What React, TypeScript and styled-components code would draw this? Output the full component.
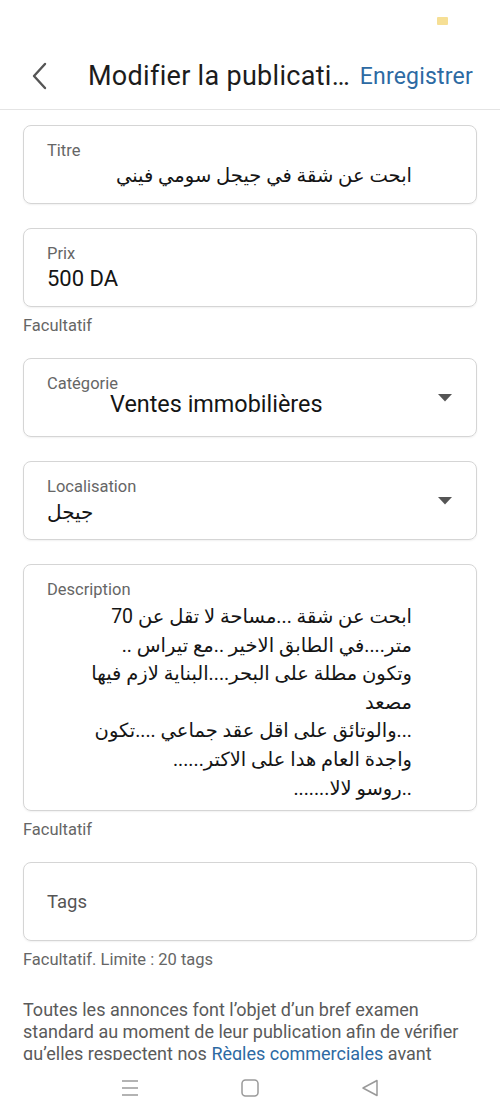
import React from 'react'
import styled, { createGlobalStyle } from 'styled-components'

const GlobalStyle = createGlobalStyle`
  html, body {
    margin: 0;
    padding: 0;
    background: #fff;
  }
  body {
    font-family: Roboto, "DejaVu Sans", sans-serif;
    -webkit-font-smoothing: antialiased;
  }
`

const description = [
  'ابحت عن شقة ...مساحة لا تقل عن 70',
  'متر....في الطابق الاخير ..مع تيراس ..',
  'وتكون مطلة على البحر....البناية لازم فيها',
  'مصعد',
  '...والوتائق على اقل عقد جماعي ....تكون',
  'واجدة العام هدا على الاكتر......',
  '..روسو لالا.......'
]

const Chevron = () => (
  <svg width="16" height="28" viewBox="0 0 16 28" fill="none">
    <polyline points="13,2 2,14 13,26" stroke="#555" strokeWidth="2.4" strokeLinecap="round" strokeLinejoin="round" />
  </svg>
)

const Caret = () => (
  <svg width="14" height="8" viewBox="0 0 14 8">
    <polygon points="0,0 14,0 7,7.5" fill="#555" />
  </svg>
)

const MenuIcon = () => (
  <svg width="18" height="18" viewBox="0 0 18 18" fill="none" stroke="#9a9a9a" strokeWidth="1.5">
    <line x1="1" y1="2" x2="17" y2="2" />
    <line x1="1" y1="9" x2="17" y2="9" />
    <line x1="1" y1="16" x2="17" y2="16" />
  </svg>
)

const HomeIcon = () => (
  <svg width="18" height="18" viewBox="0 0 18 18" fill="none" stroke="#9a9a9a" strokeWidth="1.5">
    <rect x="1" y="1" width="16" height="16" rx="3.5" />
  </svg>
)

const BackIcon = () => (
  <svg width="18" height="18" viewBox="0 0 18 18" fill="none" stroke="#9a9a9a" strokeWidth="1.5" strokeLinejoin="round">
    <polygon points="16,1.5 16,16.5 2,9" />
  </svg>
)

export default function App() {
  return (
    <>
      <GlobalStyle />
      <Screen>
        <StatusBar>
          <Battery />
        </StatusBar>
        <Header>
          <BackButton>
            <Chevron />
          </BackButton>
          <Title>Modifier la publicati…</Title>
          <SaveButton>Enregistrer</SaveButton>
        </Header>

        <Content>
          <Field>
            <FieldBody>
              <Label>Titre</Label>
              <Value $rtl>ابحت عن شقة في جيجل سومي فيني</Value>
            </FieldBody>
          </Field>

          <Field>
            <FieldBody>
              <Label>Prix</Label>
              <Value>500 DA</Value>
            </FieldBody>
          </Field>
          <Helper>Facultatif</Helper>

          <Field>
            <FieldBody>
              <Label>Catégorie</Label>
              <Value $indent={63} $size={23.4} $lift>Ventes immobilières</Value>
            </FieldBody>
            <Caret />
          </Field>

          <Field>
            <FieldBody>
              <Label>Localisation</Label>
              <Value $size={20}>جيجل</Value>
            </FieldBody>
            <Caret />
          </Field>

          <Field $tall>
            <FieldBody>
              <Label>Description</Label>
              <Paragraph>
                {description.map((line, i) => (
                  <Line key={i}>{line}</Line>
                ))}
              </Paragraph>
            </FieldBody>
          </Field>
          <Helper>Facultatif</Helper>

          <Field>
            <Placeholder>Tags</Placeholder>
          </Field>
          <Helper>Facultatif. Limite : 20 tags</Helper>

          <Notice>
            Toutes les annonces font l’objet d’un bref examen standard au moment de leur
            publication afin de vérifier qu’elles respectent nos <Link>Règles commerciales</Link>{' '}
            avant d’être publiées.
          </Notice>
        </Content>

        <NavBar>
          <MenuIcon />
          <HomeIcon />
          <BackIcon />
        </NavBar>
      </Screen>
    </>
  )
}

const Screen = styled.div`
  width: 500px;
  height: 1120px;
  display: flex;
  flex-direction: column;
  overflow: hidden;
  background: #fff;
`

const StatusBar = styled.div`
  height: 45px;
  display: flex;
  justify-content: flex-end;
  padding: 17px 52px 0 0;
  box-sizing: border-box;
`

const Battery = styled.span`
  width: 11px;
  height: 8px;
  border-radius: 1px;
  background: #f6df95;
`

const Header = styled.div`
  height: 65px;
  box-sizing: border-box;
  border-bottom: 1px solid #e4e4e4;
  display: flex;
  align-items: center;
  padding: 0 27px 2px 32px;
`

const BackButton = styled.div`
  width: 56px;
  display: flex;
  align-items: center;
`

const Title = styled.div`
  flex: 1;
  font-size: 27px;
  letter-spacing: 0.3px;
  color: #1c1c1c;
  white-space: nowrap;
`

const SaveButton = styled.div`
  font-size: 23px;
  letter-spacing: 0.2px;
  color: #2d6aa3;
  font-weight: 400;
`

const Content = styled.div`
  flex: 1;
  overflow: hidden;
  padding: 15px 23px 0;
  display: flex;
  flex-direction: column;
`

const Field = styled.div<{ $tall?: boolean }>`
  box-sizing: border-box;
  height: ${p => (p.$tall ? 247 : 79)}px;
  flex-shrink: 0;
  border: 1px solid #d5d5d5;
  border-radius: 8px;
  box-shadow: 0 1px 2px rgba(0, 0, 0, 0.06);
  display: flex;
  align-items: center;
  padding: 0 24px 0 23px;
  margin-bottom: 24px;
`

const FieldBody = styled.div`
  flex: 1;
  align-self: flex-start;
  padding-top: 15px;
  display: flex;
  flex-direction: column;
`

const Label = styled.div`
  font-size: 16.5px;
  line-height: 20px;
  color: #666;
`

const Value = styled.div<{ $rtl?: boolean; $indent?: number; $size?: number; $lift?: boolean }>`
  font-size: ${p => p.$size ?? (p.$rtl ? 19.5 : 22)}px;
  line-height: 28px;
  color: #151515;
  margin-top: ${p => (p.$lift ? -4 : 1)}px;
  margin-left: ${p => p.$indent ?? 0}px;
  direction: ${p => (p.$rtl ? 'rtl' : 'ltr')};
  margin-right: ${p => (p.$rtl ? 40 : 0)}px;
`

const Paragraph = styled.div`
  direction: rtl;
  margin-right: 40px;
  margin-top: 3px;
  font-size: 19.5px;
  color: #151515;
`

const Line = styled.div`
  line-height: 28.6px;
  white-space: nowrap;
`

const Placeholder = styled.div`
  font-size: 18.5px;
  color: #555;
`

const Helper = styled.div`
  font-size: 16.5px;
  line-height: 20px;
  color: #666;
  margin: -15px 0 22px;
`

const Notice = styled.p`
  margin: 7px 0 0;
  font-size: 18px;
  line-height: 22px;
  color: #5a5a5a;
`

const Link = styled.span`
  color: #2d6aa3;
`

const NavBar = styled.div`
  height: 60px;
  flex-shrink: 0;
  background: #fff;
  display: flex;
  justify-content: center;
  align-items: center;
  gap: 102px;
  padding-bottom: 4px;
  box-sizing: border-box;
`
